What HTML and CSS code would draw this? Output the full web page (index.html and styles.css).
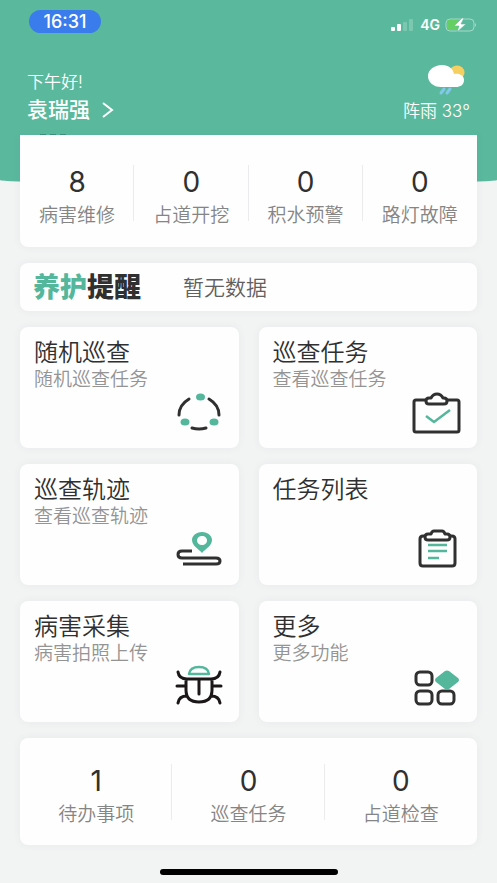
FILE: index.html
```html
<!DOCTYPE html>
<html lang="zh-CN">
<head>
<meta charset="utf-8">
<meta name="viewport" content="width=device-width, initial-scale=1">
<title>养护巡查</title>
<link rel="stylesheet" href="styles.css">
</head>
<body>
<div class="app">
  <header class="top">
    <div class="status">
      <span class="clock">16:31</span>
      <div class="signals">
        <svg width="24" height="12" viewBox="0 0 24 12" fill="#fff" aria-hidden="true">
          <rect x="0" y="8" width="4" height="4" rx="1"/><rect x="6" y="5" width="4" height="7" rx="1"/>
          <rect x="12" y="3" width="4" height="9" rx="1" opacity=".2"/><rect x="18" y="0" width="4" height="12" rx="1" opacity=".2"/>
        </svg>
        <span class="network">4G</span>
        <svg width="32" height="16" viewBox="0 0 32 16" aria-hidden="true">
          <rect x="1" y="2" width="28" height="12" rx="4" fill="none" stroke="#a5d9c8"/>
          <rect x="2" y="3" width="12" height="10" rx="2" fill="#65cf63"/>
          <path d="M30 6q2 2 0 4z" fill="#a5d9c8"/>
          <path d="M17 1 9 9h5l-2 6 9-8h-5l3-6z" fill="#fff" stroke="#5ab99d" stroke-width=".6"/>
        </svg>
      </div>
    </div>
    <div class="hello">
      <div class="user">
        <p class="greeting">下午好!</p>
        <a class="name" href="#profile">袁瑞强
          <svg width="12" height="16" viewBox="0 0 12 16" fill="none" stroke="#fff" stroke-width="2" aria-hidden="true"><path d="m1 1 9 7-9 7"/></svg>
        </a>
      </div>
      <div class="weather">
        <svg width="38" height="30" viewBox="0 0 38 30" aria-hidden="true">
          <ellipse cx="29" cy="7.500" rx="7.500" ry="7" fill="#f6cf61"/>
          <path d="M14 0c7 0 11 4 12 9 5-1 10 1 10 6s-4 7-8 7H13C5 22 0 17 0 11S6 0 14 0z" fill="#fff"/>
          <path d="m16 24-3 4m9-4-3 4" stroke="#82c8e8" stroke-width="3" stroke-linecap="round"/>
        </svg>
        <span>阵雨 33°</span>
      </div>
    </div>
  </header>

  <main class="content">
    <ul class="card stats stats-main">
      <li><b>8</b><span>病害维修</span></li>
      <li><b>0</b><span>占道开挖</span></li>
      <li><b>0</b><span>积水预警</span></li>
      <li><b>0</b><span>路灯故障</span></li>
    </ul>

    <section class="card reminder">
      <h2><em>养护</em>提醒</h2>
      <p>暂无数据</p>
    </section>

    <nav class="tiles">
      <a class="card tile" href="#random">
        <h3>随机巡查</h3><p>随机巡查任务</p>
        <svg width="48" height="44" viewBox="0 0 48 44" fill="none" stroke="#303030" stroke-width="3" stroke-linecap="round" aria-hidden="true">
          <path d="M14 6Q4 12 4 22M34 6q10 6 10 16M17 35q7 2 14 0"/>
          <g fill="#54b79b" stroke="none"><ellipse cx="25.5" cy="4" rx="4.5" ry="3.5"/><ellipse cx="10" cy="29" rx="4.5" ry="3.5"/><ellipse cx="39" cy="29" rx="4.5" ry="3.5"/></g>
        </svg>
      </a>
      <a class="card tile" href="#tasks">
        <h3>巡查任务</h3><p>查看巡查任务</p>
        <svg width="48" height="44" viewBox="0 0 48 44" fill="none" stroke="#303030" stroke-width="3" stroke-linejoin="round" aria-hidden="true">
          <path d="M13 7H3Q1 7 1 9v28q0 2 2 2h41q2 0 2-2V9q0-2-2-2H33"/>
          <path d="M16 5h2q2-4 6-4t6 4h1q3 0 3 3t-3 3H16q-3 0-3-3t3-3z"/>
          <path d="m13 23 8 6 16-12" stroke="#54b79b" stroke-width="2.5" stroke-linejoin="miter"/>
        </svg>
      </a>
      <a class="card tile" href="#tracks">
        <h3>巡查轨迹</h3><p>查看巡查轨迹</p>
        <svg width="48" height="44" viewBox="0 0 48 44" fill="none" stroke="#303030" stroke-width="3" aria-hidden="true">
          <path d="M17 21H7q-4 0-4 3.500T7 28h34q4 0 4 3t-4 3H8"/>
          <path fill-rule="evenodd" d="M27 2c-6 0-10 4-10 8 0 6 7 9 10 13 3-4 10-7 10-13 0-4-4-8-10-8zm0 4c3 0 5 2 5 4.500S30 15 27 15s-5-2-5-4.500S24 6 27 6z" fill="#54b79b" stroke="none"/>
        </svg>
      </a>
      <a class="card tile" href="#list">
        <h3>任务列表</h3>
        <svg width="48" height="44" viewBox="0 0 48 44" fill="none" stroke="#303030" stroke-width="3" stroke-linejoin="round" aria-hidden="true">
          <path d="M13 6h-3Q7 6 7 9v24q0 3 3 3h29q3 0 3-3V9q0-3-3-3h-3"/>
          <path d="M15 4h3q1-3 3-3h8q2 0 3 3h2q3 0 3 3t-3 3H15q-3 0-3-3t3-3z"/>
          <path d="M15 15h19M15 21h19M15 28h11" stroke="#54b79b" stroke-width="2.5"/>
        </svg>
      </a>
      <a class="card tile" href="#collect">
        <h3>病害采集</h3><p>病害拍照上传</p>
        <svg width="48" height="44" viewBox="0 0 48 44" fill="none" stroke="#1b1718" stroke-width="3" stroke-linecap="round" aria-hidden="true">
          <path d="M3 5q1 7 9 7h24q8 0 9-7M11 12v11q0 12 13 12t13-12V12M24 13v14M2 19h8m28 0h8M3 36q1-7 9-7m24 0q8 0 9 7"/>
          <path d="M14 7q1-7 10-7t10 7z" stroke="#54b79b" stroke-width="2.5" stroke-linejoin="round"/>
        </svg>
      </a>
      <a class="card tile" href="#more">
        <h3>更多</h3><p>更多功能</p>
        <svg width="48" height="44" viewBox="0 0 48 44" fill="none" stroke="#303030" stroke-width="3" aria-hidden="true">
          <rect x="3" y="5" width="16" height="13" rx="4"/><rect x="3" y="24" width="16" height="13" rx="4"/><rect x="25" y="24" width="16" height="13" rx="4"/>
          <path d="M32 4q2-1 4 0l9 7q2 2 0 4l-9 7q-2 1-4 0l-9-7q-2-2 0-4z" fill="#54b79b" stroke="none"/>
        </svg>
      </a>
    </nav>

    <ul class="card stats stats-todo">
      <li><b>1</b><span>待办事项</span></li>
      <li><b>0</b><span>巡查任务</span></li>
      <li><b>0</b><span>占道检查</span></li>
    </ul>
  </main>
  <div class="home-bar"></div>
</div>
</body>
</html>
```
FILE: styles.css
```css
* { box-sizing: border-box; }

body, h2, h3, p, ul { margin: 0; padding: 0; }

body {
  background: #f2f4f4;
  color: #303030;
  font-family: Inter, "Noto Sans CJK SC", sans-serif;
}

a { color: inherit; text-decoration: none; }
svg { display: block; flex: none; overflow: visible; }

.app {
  position: relative;
  isolation: isolate;
  min-height: 100vh;
  display: flex;
  flex-direction: column;
}

/* Green backdrop with a slightly curved lower edge */
.app::before {
  content: "";
  position: absolute;
  z-index: -1;
  inset: 0 0 auto;
  height: 184px;
  background: #5ab99d;
  border-radius: 0 0 50% 50% / 0 0 4px 4px;
}

.top { color: #fff; }

.status {
  display: flex;
  justify-content: space-between;
  align-items: center;
  padding: 10px 20px 0 29px;
}

.clock {
  width: 72px;
  border-radius: 12px;
  background: #3b7cec;
  font-size: 18px;
  font-weight: 500;
  line-height: 23px;
  text-align: center;
}

.signals { display: flex; align-items: center; gap: 5px; padding-top: 6px; }
.network { font-size: 14px; font-weight: 600; line-height: 16px; }

.hello {
  display: flex;
  justify-content: space-between;
  padding: 32px 27px 10px;
}

.user { padding-top: 4px; }
.greeting { font-size: 17px; font-weight: 350; line-height: 26px; }

.name {
  display: flex;
  align-items: center;
  gap: 12px;
  font-size: 21px;
  font-weight: 500;
  line-height: 30px;
}

.weather {
  display: flex;
  flex-direction: column;
  align-items: flex-end;
  gap: 3px;
  font-size: 17px;
  font-weight: 350;
  line-height: 26px;
}
.weather svg { margin-right: 4px; }

.content {
  display: flex;
  flex-direction: column;
  gap: 16px;
  padding: 0 20px;
}

.card {
  background: #fefefe;
  border-radius: 8px;
  box-shadow: 0 0 8px rgba(60, 70, 90, .06);
}

.stats { display: flex; list-style: none; }

.stats li {
  flex: 1;
  display: flex;
  flex-direction: column;
  align-items: center;
  gap: 5px;
}

.stats li:not(:last-child) {
  background: linear-gradient(#ebebed, #ebebed) right top / 1px 56px no-repeat;
}

.stats b { font-size: 28px; font-weight: 400; line-height: 34px; }
.stats span { color: #858585; font-size: 19px; font-weight: 350; line-height: 24px; }

.stats-main {
  position: relative;
  padding: 30px 0 19px;
  border-radius: 0 0 8px 8px;
}

.stats-main::before {
  content: "";
  position: absolute;
  bottom: 100%;
  left: 20px;
  width: 26px;
  height: 1px;
  background: repeating-linear-gradient(90deg, #3c8f78 0 6px, #5ab99d 6px 10px);
}

.stats-todo { padding: 26px 0 18px; }

.reminder {
  display: flex;
  align-items: center;
  gap: 42px;
  padding: 7px 13px 5px;
}
.reminder h2 { font-size: 27px; font-weight: 900; line-height: 36px; }
.reminder em { color: #54b79b; font-style: normal; }
.reminder p { color: #606060; font-size: 21px; font-weight: 350; line-height: 36px; }

.tiles {
  display: grid;
  grid-template-columns: 1fr 1fr;
  gap: 16px 20px;
}

.tile {
  display: flex;
  flex-direction: column;
  min-height: 121px;
  padding: 11px 14px;
}
.tile h3 { font-size: 24px; font-weight: 350; line-height: 30px; }
.tile p { color: #949494; font-size: 19px; font-weight: 350; line-height: 24px; }
.tile svg { margin: auto 2px 0 auto; }

.home-bar {
  align-self: center;
  width: 178px;
  height: 6px;
  margin: 24px 0 8px;
  border-radius: 3px;
  background: #000;
}
```
